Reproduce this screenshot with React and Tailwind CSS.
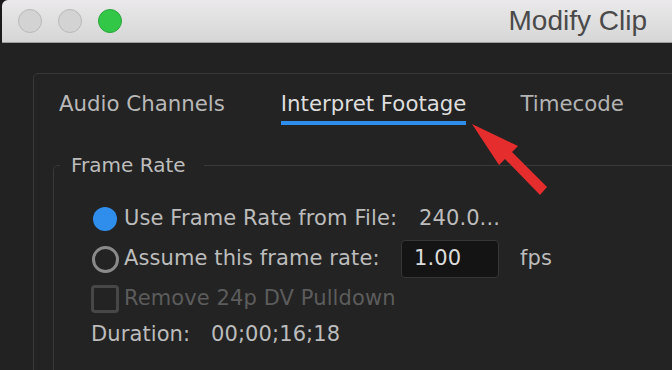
import React from 'react';

const Radio = ({ checked }) => (
  <div className="w-[28px] h-[28px] flex items-center justify-center shrink-0">
    {checked ? (
      <div className="w-[24px] h-[24px] rounded-full bg-[#2f8eec]" />
    ) : (
      <div className="w-[27px] h-[27px] rounded-full border-[3px] border-[#8a8a8a]" />
    )}
  </div>
);

const App = () => {
  return (
    <div className="relative w-[672px] h-[370px] overflow-hidden bg-[#1b1b1b] flex flex-col font-['DejaVu_Sans',sans-serif]">
      {/* title bar */}
      <div className="h-[43px] ml-[2px] shrink-0 flex items-center rounded-tl-[6px] border-b border-[#9d9d9d] bg-gradient-to-b from-[#ebe9eb] to-[#d6d6d6]">
        <div className="flex items-center gap-[16px] pl-[16px]">
          <div className="w-[24px] h-[24px] rounded-full bg-[#d3d3d3] border border-[#b9b9b9]" />
          <div className="w-[24px] h-[24px] rounded-full bg-[#d3d3d3] border border-[#b9b9b9]" />
          <div className="w-[24px] h-[24px] rounded-full bg-[#33c748] border border-[#2aa63c]" />
        </div>
        <div className="ml-auto pr-[25px] text-[28px] leading-none text-[#4a4a4a] font-['Liberation_Sans',sans-serif]">
          Modify Clip
        </div>
      </div>

      {/* window body */}
      <div className="flex-1 bg-[#222222] pt-[30px] pl-[33px]">
        <div className="w-[700px] h-[400px] border border-[#383838] rounded-[5px] bg-[#232323] pl-[19px] pt-[16px]">
          {/* tabs */}
          <div className="ml-[6px] flex text-[21.3px] leading-[28px]">
            <div className="flex flex-col">
              <span className="text-[#b8b8b8]">Audio Channels</span>
              <div className="h-[4px] mt-[3px]" />
            </div>
            <div className="flex flex-col ml-[56px]">
              <span className="text-[#dedede]">Interpret Footage</span>
              <div className="h-[4px] mt-[3px] bg-[#2f8eec]" />
            </div>
            <div className="flex flex-col ml-[54px]">
              <span className="text-[#b3b3b3]">Timecode</span>
              <div className="h-[4px] mt-[3px]" />
            </div>
          </div>

          {/* frame rate group */}
          <fieldset className="mt-[26px] border border-[#393939] rounded-[5px]">
            <legend className="ml-[6px] pl-[11px] pr-[18px] text-[20px] leading-[28px] text-[#bdbdbd]">
              Frame Rate
            </legend>

            <div className="flex flex-col pl-[37px] pt-[20px] pb-[40px] text-[21px] tracking-[0.1px] text-[#bcbcbc]">
              <div className="h-[40px] flex items-center">
                <Radio checked />
                <span className="ml-[5px] w-[277px] shrink-0">Use Frame Rate from File:</span>
                <span className="pl-[18px]">240.0...</span>
              </div>

              <div className="h-[40px] flex items-center">
                <Radio />
                <span className="ml-[5px] w-[277px] shrink-0">Assume this frame rate:</span>
                <div className="w-[98px] h-[38px] shrink-0 flex items-center pl-[12px] bg-[#141414] border border-[#363636] rounded-[4px] text-[#dcdcdc]">
                  1.00
                </div>
                <span className="ml-[21px]">fps</span>
              </div>

              <div className="h-[40px] flex items-center">
                <div className="w-[28px] h-[28px] rounded-[4px] border-[3px] border-[#474747] shrink-0" />
                <span className="ml-[5px] text-[#5c5c5c]">Remove 24p DV Pulldown</span>
              </div>

              <div className="h-[32px] flex items-center">
                <span className="w-[120px] shrink-0">Duration:</span>
                <span>00;00;16;18</span>
              </div>
            </div>
          </fieldset>
        </div>
      </div>

      {/* annotation arrow */}
      <svg className="absolute inset-0 pointer-events-none" width="672" height="370" viewBox="0 0 672 370">
        <polygon
          points="472,124 518,146 512,152 547,187 540,195 505,159 499,165"
          fill="#e52d2d"
        />
      </svg>
    </div>
  );
};

export default App;
